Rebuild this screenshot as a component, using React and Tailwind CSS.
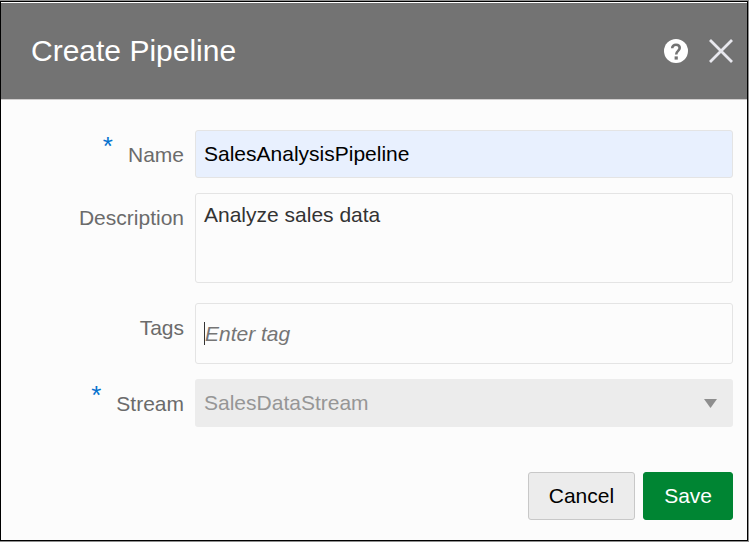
import { useState } from "react";

function Label({ htmlFor, required, children }) {
  return (
    <label htmlFor={htmlFor} className="flex items-start justify-end gap-[15px] pt-[13px] leading-6 text-[#6b6b6b]">
      {required && (
        <span aria-hidden="true" className="text-[26px] leading-[6px] text-[#0572ce]">
          *
        </span>
      )}
      {children}
    </label>
  );
}

function HelpIcon() {
  return (
    <svg width="24" height="24" viewBox="0 0 24 24" fill="none" aria-hidden="true">
      <circle cx="12" cy="12" r="12" fill="#ffffff" />
      <path d="M8.2 9.3C8.2 6.9 9.8 5.8 12 5.8s3.7 1.2 3.7 3.3c0 2.7-3.500 2.900-3.500 6.300" stroke="#737373" strokeWidth="2.6" />
      <rect x="10.600" y="17.400" width="3.200" height="3.200" fill="#737373" />
    </svg>
  );
}

function CloseIcon() {
  return (
    <svg width="24" height="24" viewBox="0 0 24 24" aria-hidden="true">
      <path d="M1 1 23 23M23 1 1 23" stroke="#e8e8ee" strokeWidth="2.8" />
    </svg>
  );
}

export default function App() {
  const [name, setName] = useState("SalesAnalysisPipeline");
  const [description, setDescription] = useState("Analyze sales data");
  const [tag, setTag] = useState("");

  return (
    <div className="min-h-screen border-t border-r border-b border-[#8f8f8f] bg-[#fcfcfc] font-['Liberation_Sans',Arial,sans-serif] text-[21px] flex flex-col">
      <div role="dialog" aria-labelledby="title" className="flex-1 border border-black">
        <header className="flex items-center justify-between border-t border-b border-t-white border-b-[#d0cece] bg-[#737373] py-8 pr-[14px] pl-[30px]">
          <h1 id="title" className="text-[30px] leading-8 text-white">
            Create Pipeline
          </h1>
          <div className="flex items-center gap-[21px]">
            <button type="button" aria-label="Help">
              <HelpIcon />
            </button>
            <button type="button" aria-label="Close">
              <CloseIcon />
            </button>
          </div>
        </header>

        <form className="pt-[30px] pr-[14px] pb-5" onSubmit={(e) => e.preventDefault()}>
          <div className="grid grid-cols-[183px_1fr] gap-x-[11px]">
            <Label htmlFor="name" required>
              Name
            </Label>
            <input
              id="name"
              value={name}
              onChange={(e) => setName(e.target.value)}
              className="mb-[15px] h-12 w-full min-w-0 rounded-[3px] border border-[#e4e4e4] bg-[#e8f0fe] px-2 text-black outline-none"
            />

            <Label htmlFor="description">Description</Label>
            <textarea
              id="description"
              value={description}
              onChange={(e) => setDescription(e.target.value)}
              className="mb-5 block h-[90px] w-full min-w-0 resize-none rounded-[3px] border border-[#e4e4e4] bg-[#fcfcfc] px-2 py-[9px] leading-6 text-[#333333] outline-none"
            />

            <Label htmlFor="tags">Tags</Label>
            <div className="mb-[15px] flex h-[61px] items-center rounded-[3px] border border-[#e4e4e4] px-2">
              <span aria-hidden="true" className="h-[23px] w-px bg-[#333333]" />
              <input
                id="tags"
                value={tag}
                placeholder="Enter tag"
                onChange={(e) => setTag(e.target.value)}
                className="min-w-0 flex-1 bg-transparent outline-none placeholder:text-[#757575] placeholder:italic"
              />
            </div>

            <Label htmlFor="stream" required>
              Stream
            </Label>
            <div className="grid items-center">
              <select
                id="stream"
                disabled
                className="col-start-1 row-start-1 h-12 w-full appearance-none rounded-[3px] bg-[#ececec] px-[9px] text-[#969696] opacity-100"
              >
                <option>SalesDataStream</option>
              </select>
              <svg
                className="pointer-events-none col-start-1 row-start-1 mr-4 justify-self-end"
                width="13"
                height="9"
                viewBox="0 0 13 9"
                aria-hidden="true"
              >
                <path d="M0 0h13L6.500 9z" fill="#8e8e8e" />
              </svg>
            </div>
          </div>

          <div className="mt-[45px] flex justify-end gap-2">
            <button type="button" className="h-12 rounded-[3px] border border-[#c8c8c8] bg-[#ececec] px-5 text-black">
              Cancel
            </button>
            <button type="submit" className="h-12 rounded-[3px] border border-[#008533] bg-[#008533] px-5 text-white">
              Save
            </button>
          </div>
        </form>
      </div>
    </div>
  );
}
